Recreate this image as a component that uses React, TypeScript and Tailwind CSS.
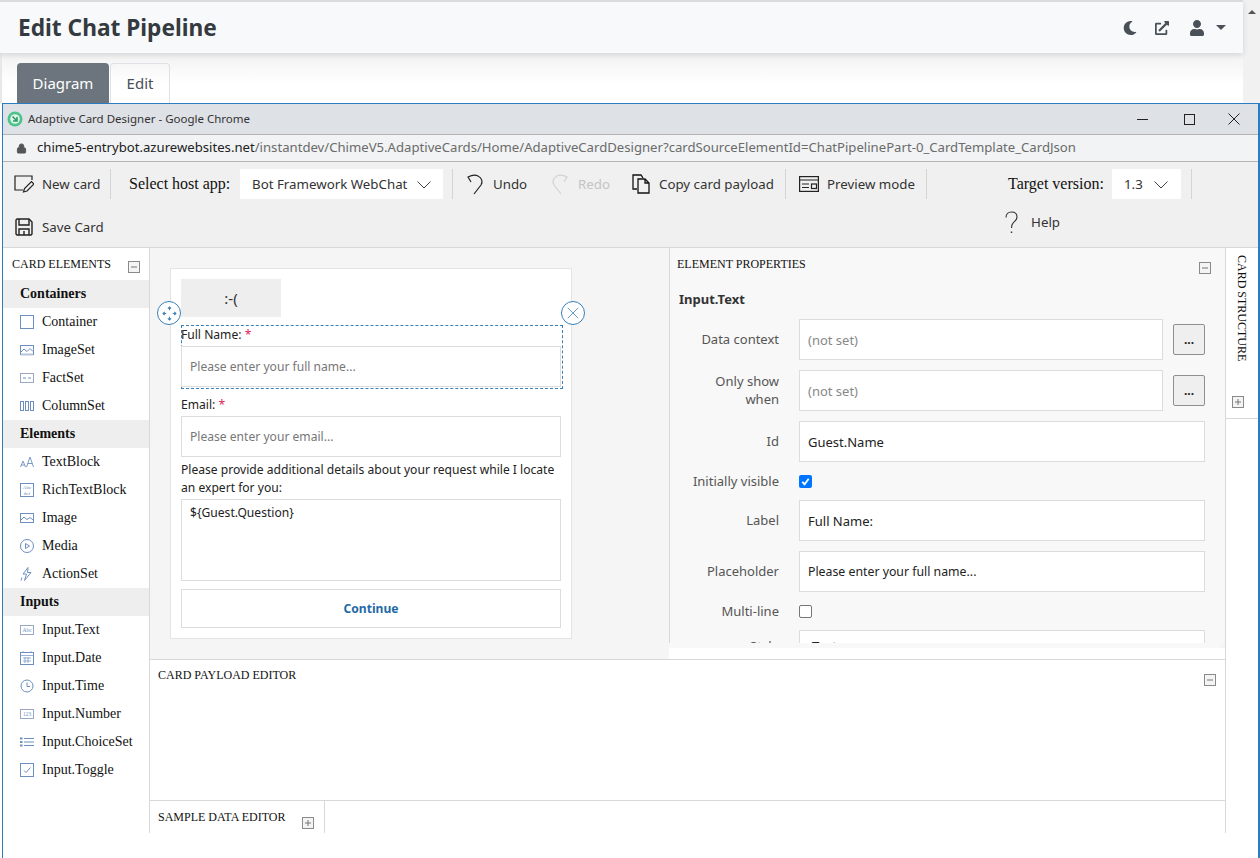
import { X, Lock } from 'lucide-react'
import { FaMoon, FaExternalLinkAlt, FaUser } from 'react-icons/fa'
import type { ReactNode } from 'react'

const serif = '[font-family:Liberation_Serif,serif]'

function Toggle({ plus = false }: { plus?: boolean }) {
  return (
    <span className="flex h-[12px] w-[12px] shrink-0 items-center justify-center border border-[#8a8a8a] bg-[#f4f4f4]">
      <svg viewBox="0 0 10 10" className="h-[10px] w-[10px]" stroke="#777" strokeWidth="1" fill="none">
        <path d="M2 5h6" />
        {plus && <path d="M5 2v6" />}
      </svg>
    </span>
  )
}

function Ico({ children }: { children: ReactNode }) {
  return (
    <svg viewBox="0 0 14 14" className="h-[14px] w-[14px] shrink-0" fill="none" stroke="#6d8fc0" strokeWidth="1">
      {children}
    </svg>
  )
}

function Chevron() {
  return (
    <svg viewBox="0 0 14 8" className="h-[8px] w-[14px] shrink-0" fill="none" stroke="#444" strokeWidth="1">
      <path d="M0.5 0.5L7 7l6.5-6.5" />
    </svg>
  )
}

const icons: Record<string, ReactNode> = {
  Container: <rect x="0.5" y="0.5" width="13" height="13" />,
  ImageSet: <><rect x="0.5" y="2.5" width="13" height="9" /><path d="M1 9l3-3 3 2.5 3-3 3 3" /><path d="M1 11.5h12" strokeWidth="2" stroke="#b6c4dc" /></>,
  FactSet: <><rect x="0.5" y="2.5" width="13" height="9" stroke="#9aa8c4" /><path d="M3 7h3M8 7h3" /></>,
  ColumnSet: <><rect x="0.5" y="2.5" width="3" height="9" /><rect x="5.5" y="2.5" width="3" height="9" /><rect x="10.5" y="2.5" width="3" height="9" /></>,
  TextBlock: <path d="M0.5 12L3 6l2.5 6M1.3 10h3.4M6.5 12L10 2l3.5 10M7.8 8.5h4.4" strokeWidth="0.9" />,
  RichTextBlock: <><rect x="0.5" y="0.5" width="13" height="13" /><text x="7" y="6" fontSize="5" textAnchor="middle" fill="#6d8fc0" stroke="none">Abc</text><text x="7" y="11.5" fontSize="5" textAnchor="middle" fill="#6d8fc0" stroke="none">def</text></>,
  Image: <><rect x="0.5" y="2.5" width="13" height="9" /><path d="M1 9l3-3 3 2.5 3-2 3 2.5" /></>,
  Media: <><circle cx="7" cy="7" r="6.5" /><path d="M5.5 4.5l4 2.5-4 2.5z" /></>,
  ActionSet: <path d="M8 0.5L3 7h3.5L4.5 13.5 11 5.5H7.5L8 0.5zM2 10.5l-1 3" />,
  'Input.Text': <><rect x="0.5" y="2.5" width="13" height="9" stroke="#9aa8c4" /><text x="7" y="9.2" fontSize="5.5" textAnchor="middle" fill="#6d8fc0" stroke="none">Abc</text></>,
  'Input.Date': <><rect x="0.5" y="1.5" width="13" height="12" /><path d="M0.5 4.5h13M3 0v2M11 0v2M3 7h8M3 10h8M5 6v6M8 6v6" strokeWidth="0.7" /></>,
  'Input.Time': <><circle cx="7" cy="7" r="6" /><path d="M7 3.5V7.5h3" /></>,
  'Input.Number': <><rect x="0.5" y="2.5" width="13" height="9" stroke="#9aa8c4" /><text x="7" y="9.2" fontSize="5.5" textAnchor="middle" fill="#6d8fc0" stroke="none">123</text></>,
  'Input.ChoiceSet': <><path d="M4 3.5h10M4 7h10M4 10.5h10" /><path d="M0 3.5h2.5M0 7h2.5M0 10.5h2.5" strokeWidth="2" /></>,
  'Input.Toggle': <><rect x="0.5" y="0.5" width="13" height="13" /><path d="M4 7.5l2 2 4.5-5" /></>,
}

const groups = [
  { title: 'Containers', items: ['Container', 'ImageSet', 'FactSet', 'ColumnSet'] },
  { title: 'Elements', items: ['TextBlock', 'RichTextBlock', 'Image', 'Media', 'ActionSet'] },
  { title: 'Inputs', items: ['Input.Text', 'Input.Date', 'Input.Time', 'Input.Number', 'Input.ChoiceSet', 'Input.Toggle'] },
]

function Sep() {
  return <div className="h-[30px] w-px shrink-0 bg-[#d4d4d4]" />
}

function ToolButton({ icon, label, muted, gap = 'gap-[8px]', cls = '' }: { icon: ReactNode; label: string; muted?: boolean; gap?: string; cls?: string }) {
  return (
    <div className={`flex h-[30px] shrink-0 items-center whitespace-nowrap text-[13.3px] ${gap} ${cls} ${muted ? 'text-[#c4c4c4]' : 'text-[#333]'}`}>
      {icon}
      <span className="pt-[2px]">{label}</span>
    </div>
  )
}

function PropRow({ label, children, small }: { label: ReactNode; children: ReactNode; small?: boolean }) {
  return (
    <div className={`flex items-center ${small ? 'h-[22px]' : 'h-[41px]'}`}>
      <div className={`w-[102px] shrink-0 text-right text-[13px] leading-[18px] text-[#555] ${small ? '' : 'pb-[2px]'}`}>{label}</div>
      <div className="ml-[20px] flex flex-1 items-center">{children}</div>
    </div>
  )
}

function Field({ value, muted, cls = 'text-[13px]' }: { value: string; muted?: boolean; cls?: string }) {
  return (
    <div className={`flex h-[41px] flex-1 items-center border border-[#dcdcdc] bg-white pl-[8px] pt-[2px] ${cls} ${muted ? 'text-[#888]' : 'text-[#222]'}`}>
      {value}
    </div>
  )
}

function Dots() {
  return (
    <div className="ml-[10px] flex h-[31px] w-[32px] shrink-0 items-center justify-center rounded-[2px] border border-[#8f8f8f] bg-[#efefef] text-[12px] font-bold text-[#222]">
      ...
    </div>
  )
}

function CardField({ text, muted, tall }: { text: string; muted?: boolean; tall?: boolean }) {
  return (
    <div className={`border border-[#dcdcdc] bg-white px-[8px] text-[12.1px] ${tall ? 'h-[82px] pt-[4px]' : 'flex h-[41px] items-center pt-[2px]'} ${muted ? 'text-[#777]' : 'text-[#222]'}`}>
      {text}
    </div>
  )
}

export default function App() {
  return (
    <div className="flex h-[858px] w-[1260px] flex-col overflow-hidden bg-white [font-family:Noto_Sans,sans-serif]">
      <div className="flex h-[103px] shrink-0">
        <div className="flex min-w-0 flex-1 flex-col">
          {/* page header */}
          <header className="relative z-10 flex h-[53px] shrink-0 items-center justify-between border-t-2 border-[#dcdcdc] bg-[#f8f9fa] pl-[18px] pr-[17px] shadow-[0_2px_6px_rgba(0,0,0,0.12)]">
            <h1 className="pt-[1px] text-[22.7px] font-bold text-[#343a40]">Edit Chat Pipeline</h1>
            <div className="flex items-center text-[#495057]">
              <FaMoon size={14} />
              <FaExternalLinkAlt size={14} className="ml-[18px]" />
              <FaUser size={16} className="ml-[20px]" />
              <span className="ml-[11px] h-0 w-0 border-x-[5px] border-t-[5px] border-x-transparent border-t-[#495057]" />
            </div>
          </header>

          {/* tabs */}
          <div className="flex h-[50px] shrink-0 items-end border-l-2 border-[#e8e8e8] bg-gradient-to-b from-[#f2f2f2] to-white to-60% pl-[15px]">
            <div className="flex h-[40px] w-[92px] items-center justify-center rounded-t-[4px] bg-[#6c757d] text-[15px] text-white">Diagram</div>
            <div className="ml-px flex h-[40px] w-[60px] items-center justify-center rounded-t-[4px] border border-b-0 border-[#dee2e6] text-[15px] text-[#495057]">Edit</div>
          </div>
        </div>
        {/* page scrollbar */}
        <div className="flex w-[17px] shrink-0 justify-center bg-[#f1f1f1] pt-[10px]">
          <span className="h-0 w-0 border-x-[4px] border-b-[4px] border-x-transparent border-b-[#555]" />
        </div>
      </div>

      {/* popup window */}
      <div className="ml-[2px] flex min-h-0 flex-1 flex-col border-l border-r-2 border-t border-[#2b7cc0] bg-white">
        <div className="flex h-[31px] shrink-0 items-center border-b border-[#b4b4b4] bg-[#dee1e6] pl-[4px] pr-[18px] text-[11.5px] text-[#333]">
          <svg viewBox="0 0 16 16" className="h-[16px] w-[16px]">
            <circle cx="8" cy="8" r="7.5" fill="#4cc38a" />
            <circle cx="8" cy="8" r="4.8" fill="#dff5ea" />
            <path d="M5.5 5.5l4.5 4.5M10 6v4H6" stroke="#2f9a68" strokeWidth="1.6" fill="none" />
          </svg>
          <span className="ml-[5px] flex-1">Adaptive Card Designer - Google Chrome</span>
          <svg viewBox="0 0 11 11" className="h-[11px] w-[11px]" stroke="#222" fill="none"><path d="M0 5.5h11" /></svg>
          <svg viewBox="0 0 11 11" className="ml-[36px] h-[11px] w-[11px]" stroke="#222" fill="none"><rect x="0.5" y="0.5" width="10" height="10" /></svg>
          <svg viewBox="0 0 12 12" className="ml-[33px] h-[12px] w-[12px]" stroke="#222" fill="none"><path d="M0.5 0.5l11 11M11.5 0.5l-11 11" /></svg>
        </div>
        <div className="flex h-[27px] shrink-0 items-center border-b border-[#b4b4b4] bg-[#f1f3f4] pl-[13px] text-[13.15px] text-[#6b6b6b]">
          <Lock size={11} fill="#555" className="text-[#555]" />
          <span className="ml-[10px] whitespace-nowrap"><span className="text-[#222]">chime5-entrybot.azurewebsites.net</span>/instantdev/ChimeV5.AdaptiveCards/Home/AdaptiveCardDesigner?cardSourceElementId=ChatPipelinePart-0_CardTemplate_CardJson</span>
        </div>

        {/* designer toolbar */}
        <div className="flex h-[86px] shrink-0 flex-col border-b border-[#d8d8d8] bg-[#f0f0f0]">
          <div className="flex h-[44px] items-center pl-[11px]">
            <ToolButton label="New card" cls="w-[87px]" icon={<svg viewBox="0 0 20 18" className="h-[18px] w-[20px] shrink-0" fill="none" stroke="#222" strokeWidth="1.2"><path d="M9 15H1V1h17v4" /><path d="M9.5 17l1-3.5 7-7 2.5 2.5-7 7z" /></svg>} />
            <div className="ml-[9px]"><Sep /></div>
            <span className={`ml-[18px] w-[111px] shrink-0 whitespace-nowrap text-[16px] text-[#111] ${serif}`}>Select host app:</span>
            <div className="flex h-[30px] w-[203px] shrink-0 items-center justify-between bg-white pl-[12px] pr-[12px] pt-[1px] text-[13.3px] text-[#333]">
              Bot Framework WebChat
              <Chevron />
            </div>
            <div className="ml-[9px]"><Sep /></div>
            <ToolButton label="Undo" cls="ml-[14px] w-[60px]" icon={<svg viewBox="0 0 18 22" className="h-[22px] w-[18px] shrink-0" fill="none" stroke="#222" strokeWidth="1.2"><path d="M4 9L1 4c4-2 8-2 10-1 4 2 5 6 3 9l-7 9" /></svg>} />
            <ToolButton muted label="Redo" cls="ml-[23px] w-[59px]" gap="gap-[10px]" icon={<svg viewBox="0 0 18 22" className="h-[22px] w-[18px] shrink-0" fill="none" stroke="#d2d2d2" strokeWidth="1.2"><path d="M14 9l3-5c-4-2-8-2-10-1-4 2-5 6-3 9l7 9" /></svg>} />
            <ToolButton label="Copy card payload" cls="ml-[23px] w-[142px]" gap="gap-[7px]" icon={<svg viewBox="0 0 20 20" className="h-[20px] w-[20px] shrink-0" fill="none" stroke="#111" strokeWidth="1.3"><path d="M5 15H1V1h8l2 3" /><path d="M6 5h7l4 4v10H6zM13 5v4h4" /></svg>} />
            <div className="ml-[11px]"><Sep /></div>
            <ToolButton label="Preview mode" cls="ml-[13px] w-[115px]" icon={<svg viewBox="0 0 20 16" className="h-[16px] w-[20px] shrink-0" fill="none" stroke="#222" strokeWidth="1.2"><rect x="0.6" y="0.6" width="18.8" height="14.8" /><path d="M1 4h18M3 8h7M3 11.5h7" /><rect x="12.5" y="8" width="5" height="4.5" /></svg>} />
            <div className="ml-[12px]"><Sep /></div>
            <span className={`ml-[81px] w-[104px] shrink-0 whitespace-nowrap text-[16px] text-[#111] ${serif}`}>Target version:</span>
            <div className="flex h-[30px] w-[69px] shrink-0 items-center justify-between bg-white pl-[12px] pr-[13px] pt-[1px] text-[13.3px] text-[#333]">
              1.3
              <Chevron />
            </div>
            <div className="ml-[10px]"><Sep /></div>
          </div>
          <div className="flex flex-1 items-center pl-[12px] pr-[198px]">
            <ToolButton label="Save Card" gap="gap-[9px]" icon={<svg viewBox="0 0 18 18" className="h-[18px] w-[18px] shrink-0" fill="none" stroke="#222" strokeWidth="1.4"><path d="M2 1h12l3 3v12l-1 1H2l-1-1V2z" /><path d="M4 1v6h10V1M4 17v-6h10v6M9 13v4" /></svg>} />
            <div className="mb-[8px] ml-auto flex items-center gap-[13px] text-[13.3px] text-[#333]">
              <svg viewBox="0 0 13 23" className="h-[23px] w-[13px]" fill="none" stroke="#333" strokeWidth="1.1">
                <path d="M1 6.5C1 3 3.3 1 6.5 1S12 3 12 6c0 3-2.2 4.2-3.8 5.8C7 13 6.5 14.3 6.5 17" />
                <path d="M6.5 20.5v1.5" strokeWidth="1.4" />
              </svg>
              Help
            </div>
          </div>
        </div>

        <div className="flex h-[585px] shrink-0">
          {/* card elements */}
          <aside className={`w-[147px] shrink-0 border-r border-[#d8d8d8] bg-white text-[14px] text-[#111] ${serif}`}>
            <div className="flex h-[32px] items-center justify-between px-[9px] text-[12px]">
              CARD ELEMENTS
              <span className="mt-[6px]"><Toggle /></span>
            </div>
            {groups.map((g) => (
              <div key={g.title}>
                <div className="flex h-[28px] items-center bg-[#eeeeee] pb-[2px] pl-[17px] font-bold">{g.title}</div>
                {g.items.map((name) => (
                  <div key={name} className="flex h-[28px] items-center gap-[8px] pl-[17px]">
                    <Ico>{icons[name]}</Ico>
                    <span className="pb-[2px]">{name}</span>
                  </div>
                ))}
              </div>
            ))}
          </aside>

          <div className="flex min-w-0 flex-1 flex-col">
            <div className="flex h-[412px] shrink-0 border-b border-[#d8d8d8]">
              {/* canvas */}
              <div className="w-[519px] shrink-0 bg-[#f5f5f5] pl-[20px] pt-[20px]">
                <div className="relative flex h-[371px] w-[402px] flex-col border border-[#e4e4e4] bg-white px-[10px] pt-[10px] text-[12.1px] text-[#222]">
                  <div className="flex h-[38px] w-[100px] shrink-0 items-center justify-center bg-[#eeeeee] text-[15px] text-[#333]">:-(</div>
                  <div className="-mr-[2px] mt-[8px] h-[64px] border border-dashed border-[#3a7fb5]">
                    <div className="-ml-px h-[20px] leading-[18px]">Full Name: <span className="text-[#e0245e]">*</span></div>
                    <div className="-ml-px mr-[1px]"><CardField text="Please enter your full name..." muted /></div>
                  </div>
                  <div className="mt-[5px] h-[22px] leading-[22px]">Email: <span className="text-[#e0245e]">*</span></div>
                  <CardField text="Please enter your email..." muted />
                  <div className="mt-[4px] leading-[18px]">Please provide additional details about your request while I locate an expert for you:</div>
                  <div className="mt-[2px]"><CardField text="${Guest.Question}" tall /></div>
                  <div className="mt-[8px] flex h-[39px] items-center justify-center border border-[#dcdcdc] pt-[2px] font-bold text-[#1f6aa5]">Continue</div>

                  <div className="absolute left-[-14px] top-[32px] flex h-[24px] w-[24px] items-center justify-center rounded-full border border-[#3a7fb5] bg-white">
                    <svg viewBox="0 0 14 14" className="h-[15px] w-[15px]" fill="none" stroke="#3a7fb5" strokeWidth="1">
                      <path d="M7 1v3M7 10v3M1 7h3M10 7h3M5.5 2.5L7 1l1.5 1.5M5.5 11.5L7 13l1.5-1.5M2.5 5.5L1 7l1.5 1.5M11.5 5.5L13 7l-1.5 1.5" />
                    </svg>
                  </div>
                  <div className="absolute left-[390px] top-[32px] flex h-[24px] w-[24px] items-center justify-center rounded-full border border-[#3a7fb5] bg-white">
                    <X size={20} strokeWidth={0.9} className="text-[#3a7fb5]" />
                  </div>
                </div>
              </div>
              {/* properties */}
              <div className="flex min-w-0 flex-1 flex-col bg-[#f5f5f5]">
                <div className="h-[395px] shrink-0 overflow-hidden border-l border-[#d8d8d8] bg-[#f8f8f8] pl-[7px] pr-[20px]">
                  <div className={`flex h-[32px] items-center justify-between text-[12px] text-[#111] ${serif}`}>
                    ELEMENT PROPERTIES
                    <span className="mr-[-6px] mt-[8px]"><Toggle /></span>
                  </div>
                  <div className="ml-[2px] h-[39px] pt-[10px] text-[13px] font-bold leading-[18px] text-[#333]">Input.Text</div>
                  <div className="flex flex-col gap-[10px]">
                    <PropRow label="Data context"><Field value="(not set)" muted /><Dots /></PropRow>
                    <PropRow label={<>Only show<br />when</>}><Field value="(not set)" muted /><Dots /></PropRow>
                    <PropRow label="Id"><Field value="Guest.Name" /></PropRow>
                    <div className="-my-[2px]">
                      <PropRow label="Initially visible" small>
                        <span className="flex h-[13px] w-[13px] items-center justify-center rounded-[2px] bg-[#0075ff]">
                          <svg viewBox="0 0 12 12" className="h-[11px] w-[11px]" fill="none" stroke="white" strokeWidth="2"><path d="M2.5 6.5l2.5 2.5 4.5-6" /></svg>
                        </span>
                      </PropRow>
                    </div>
                    <PropRow label="Label"><Field value="Full Name:" /></PropRow>
                    <PropRow label="Placeholder"><Field value="Please enter your full name..." cls="text-[12.3px]" /></PropRow>
                    <div className="-my-[2px]">
                      <PropRow label="Multi-line" small>
                        <span className="h-[13px] w-[13px] rounded-[2px] border border-[#767676] bg-white" />
                      </PropRow>
                    </div>
                    {/* cut off by the panel's scroll edge */}
                    <div className="flex h-[41px] items-start">
                      <div className="w-[102px] shrink-0 pt-[7px] text-right text-[13px] leading-[18px] text-[#555]">Style</div>
                      <div className="ml-[20px] h-[41px] flex-1 border border-[#dcdcdc] bg-white pl-[12px] pt-[6px] text-[13px] leading-[18px] text-[#222]">Text</div>
                    </div>
                  </div>
                </div>
                <div className="h-[5px] w-[551px] shrink-0 bg-[#f8f8f8]" />
                <div className="flex-1 bg-white" />
              </div>
            </div>

            {/* payload editor */}
            <div className={`h-[141px] shrink-0 border-b border-[#d8d8d8] bg-white text-[12px] text-[#111] ${serif}`}>
              <div className="flex items-start justify-between pl-[8px] pr-[9px] pt-[6px]">
                CARD PAYLOAD EDITOR
                <span className="mt-[8px]"><Toggle /></span>
              </div>
            </div>
            <div className={`flex h-[32px] shrink-0 bg-white text-[12px] text-[#111] ${serif}`}>
              <div className="flex w-[175px] items-start gap-[16px] border-r border-[#d8d8d8] pl-[8px] pt-[7px]">
                SAMPLE DATA EDITOR
                <span className="mt-[9px]"><Toggle plus /></span>
              </div>
            </div>
          </div>

          {/* card structure */}
          <div className={`w-[33px] shrink-0 border-l border-[#d8d8d8] bg-white text-[12px] text-[#111] ${serif}`}>
            <div className="flex h-[171px] flex-col border-b border-[#d8d8d8]">
              <div className="ml-[7px] mt-[7px] h-[125px] w-[18px] [writing-mode:vertical-rl]">CARD STRUCTURE</div>
              <span className="ml-[6px] mt-[16px]"><Toggle plus /></span>
            </div>
          </div>
        </div>
      </div>
    </div>
  )
}
